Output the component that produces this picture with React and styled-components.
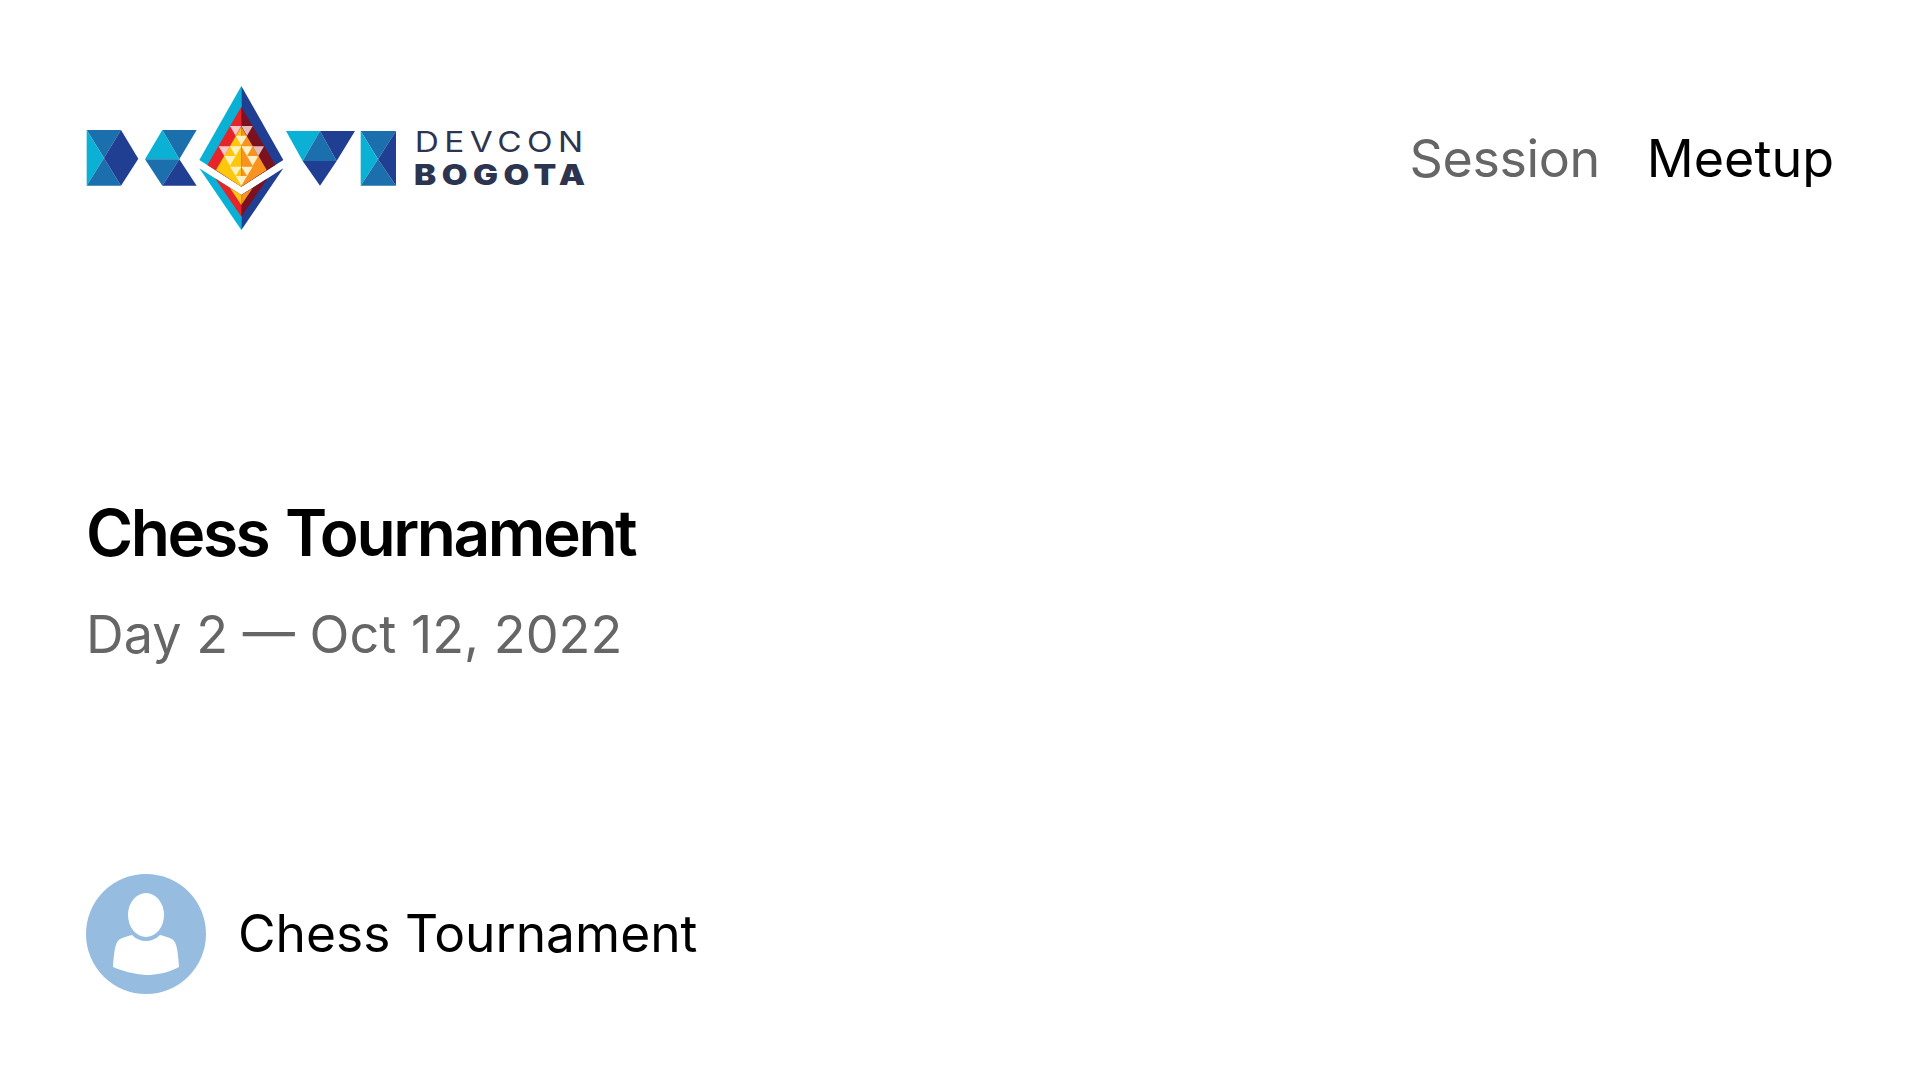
import React from 'react';
import styled, { createGlobalStyle } from 'styled-components';

const GlobalStyle = createGlobalStyle`
	html, body {
		margin: 0;
		padding: 0;
		background: #ffffff;
	}
`;

const Page = styled.div`
	box-sizing: border-box;
	width: 100%;
	height: 100vh;
	padding: 86px;
	overflow: hidden;

	display: flex;
	flex-direction: column;

	font-family: Inter, "Liberation Sans", sans-serif;
	color: #000000;
`;

const Header = styled.header`
	display: flex;
	flex-direction: row;
	justify-content: space-between;
	align-items: center;
	height: 144px;
`;

const Nav = styled.nav`
	display: flex;
	gap: 47px;
	font-size: 52px;
	line-height: 60px;
	padding-top: 1px;
`;

const NavItem = styled.span`
	color: ${props => (props.$active ? '#000000' : '#666666')};
	letter-spacing: ${props => (props.$active ? '0' : '-0.4px')};
`;

const Hero = styled.div`
	margin-top: 263px;
	flex-grow: 1;
`;

const Title = styled.h1`
	margin: 0;
	font-size: 64px;
	line-height: 80px;
	font-weight: 600;
	letter-spacing: -0.038em;
	word-spacing: 3px;
`;

const DateLine = styled.div`
	margin-top: 30px;
	font-size: 52.2px;
	line-height: 63px;
	color: #666666;
`;

const Person = styled.div`
	display: flex;
	align-items: center;
	gap: 32px;
`;

const PersonName = styled.span`
	font-size: 51.5px;
	line-height: 60px;
	margin-top: -2px;
`;

const CYAN = '#0bb0d5';
const BLUE = '#1c6fad';
const DARK = '#203f93';
const RED = '#e6252b';
const MAROON = '#7c1220';
const YELLOW = '#fdc70c';
const ORANGE = '#f7931e';
const PALE = '#fff0c4';
const PINK = '#f7c6c6';
const ROSE = '#e2bcb8';

// [points, fill], in the 3x coordinates the logo was measured in
const logoShapes = [
	['50,180 153,180 102,264', BLUE],
	['50,180 102,264 50,347', CYAN],
	['50,347 102,264 153,347', BLUE],
	['153,180 205,266 153,347 102,264', DARK],

	['277,180 380,180 328,268', BLUE],
	['277,180 328,268 225,268', CYAN],
	['225,268 328,268 277,347', BLUE],
	['328,268 380,347 277,347', DARK],

	['648,183 750,183 698,273', CYAN],
	['750,183 800,273 698,273', BLUE],
	['750,183 855,183 800,273', DARK],
	['698,273 800,273 750,347', DARK],

	['872,183 978,183 924,268', BLUE],
	['872,183 924,268 872,347', CYAN],
	['872,347 924,268 978,347', BLUE],
	['978,183 924,268 978,347', DARK],

	['514,48 388,270 514,350', CYAN],
	['514,48 640,270 514,350', DARK],
	['514,110 412,285 514,350', RED],
	['514,110 616,285 514,350', MAROON],
	['514,170 438,300 514,350', YELLOW],
	['514,170 590,300 514,350', ORANGE],

	['480,168 514,168 497,197', PINK],
	['514,168 548,168 531,197', ROSE],
	['446,229 480,229 463,258', PINK],
	['548,229 582,229 565,258', ROSE],
	['497,197 531,197 514,226', PALE],
	['480,229 514,229 497,258', PALE],
	['514,229 548,229 531,258', PALE],
	['463,258 497,258 480,287', PALE],
	['531,258 565,258 548,287', PALE],
	['480,290 514,290 497,318', PALE],
	['514,290 548,290 531,318', PALE],
	['497,318 531,318 514,347', PALE],

	['388,295 514,480 514,375', CYAN],
	['640,295 514,480 514,375', DARK],
	['435,325 514,440 514,375', RED],
	['593,325 514,440 514,375', MAROON],
	['480,354 514,405 514,375', YELLOW],
	['548,354 514,405 514,375', ORANGE],
];

const LogoTextTop = styled.text`
	font-family: Inter, sans-serif;
	font-size: 85px;
	font-weight: 400;
	letter-spacing: 14px;
	fill: #2d3450;
`;

const LogoTextBottom = styled.text`
	font-family: Inter, sans-serif;
	font-size: 84px;
	font-weight: 900;
	letter-spacing: 14px;
	fill: #2d3450;
`;

const Logo = () => (
	<svg width="499" height="144" viewBox="48 48 1497 432">
		{logoShapes.map(([points, fill], i) => <polygon key={i} points={points} fill={fill} />)}
		<LogoTextTop x="1034" y="245" textLength="522" lengthAdjust="spacingAndGlyphs">DEVCON</LogoTextTop>
		<LogoTextBottom x="1032" y="344" textLength="530" lengthAdjust="spacingAndGlyphs">BOGOTA</LogoTextBottom>
	</svg>
);

const Avatar = () => (
	<svg width="120" height="120" viewBox="0 0 120 120">
		<circle cx="60" cy="60" r="60" fill="#96bce0" />
		<ellipse cx="60" cy="41" rx="18" ry="22" fill="#ffffff" />
		<path
			d="M27 93 C28 78 29 68 34 65 C38 63 42 62 46 61 C50 65 55 67 60 67 C65 67 70 65 74 61 C78 62 82 63 86 65 C91 68 92 78 93 93 C82 99 70 101 60 101 C48 100 36 97 27 93 Z"
			fill="#ffffff"
		/>
	</svg>
);

const App = () => (
	<>
		<GlobalStyle />
		<Page>
			<Header>
				<Logo />
				<Nav>
					<NavItem>Session</NavItem>
					<NavItem $active>Meetup</NavItem>
				</Nav>
			</Header>
			<Hero>
				<Title>Chess Tournament</Title>
				<DateLine>Day 2 — Oct 12, 2022</DateLine>
			</Hero>
			<Person>
				<Avatar />
				<PersonName>Chess Tournament</PersonName>
			</Person>
		</Page>
	</>
);

export default App;
